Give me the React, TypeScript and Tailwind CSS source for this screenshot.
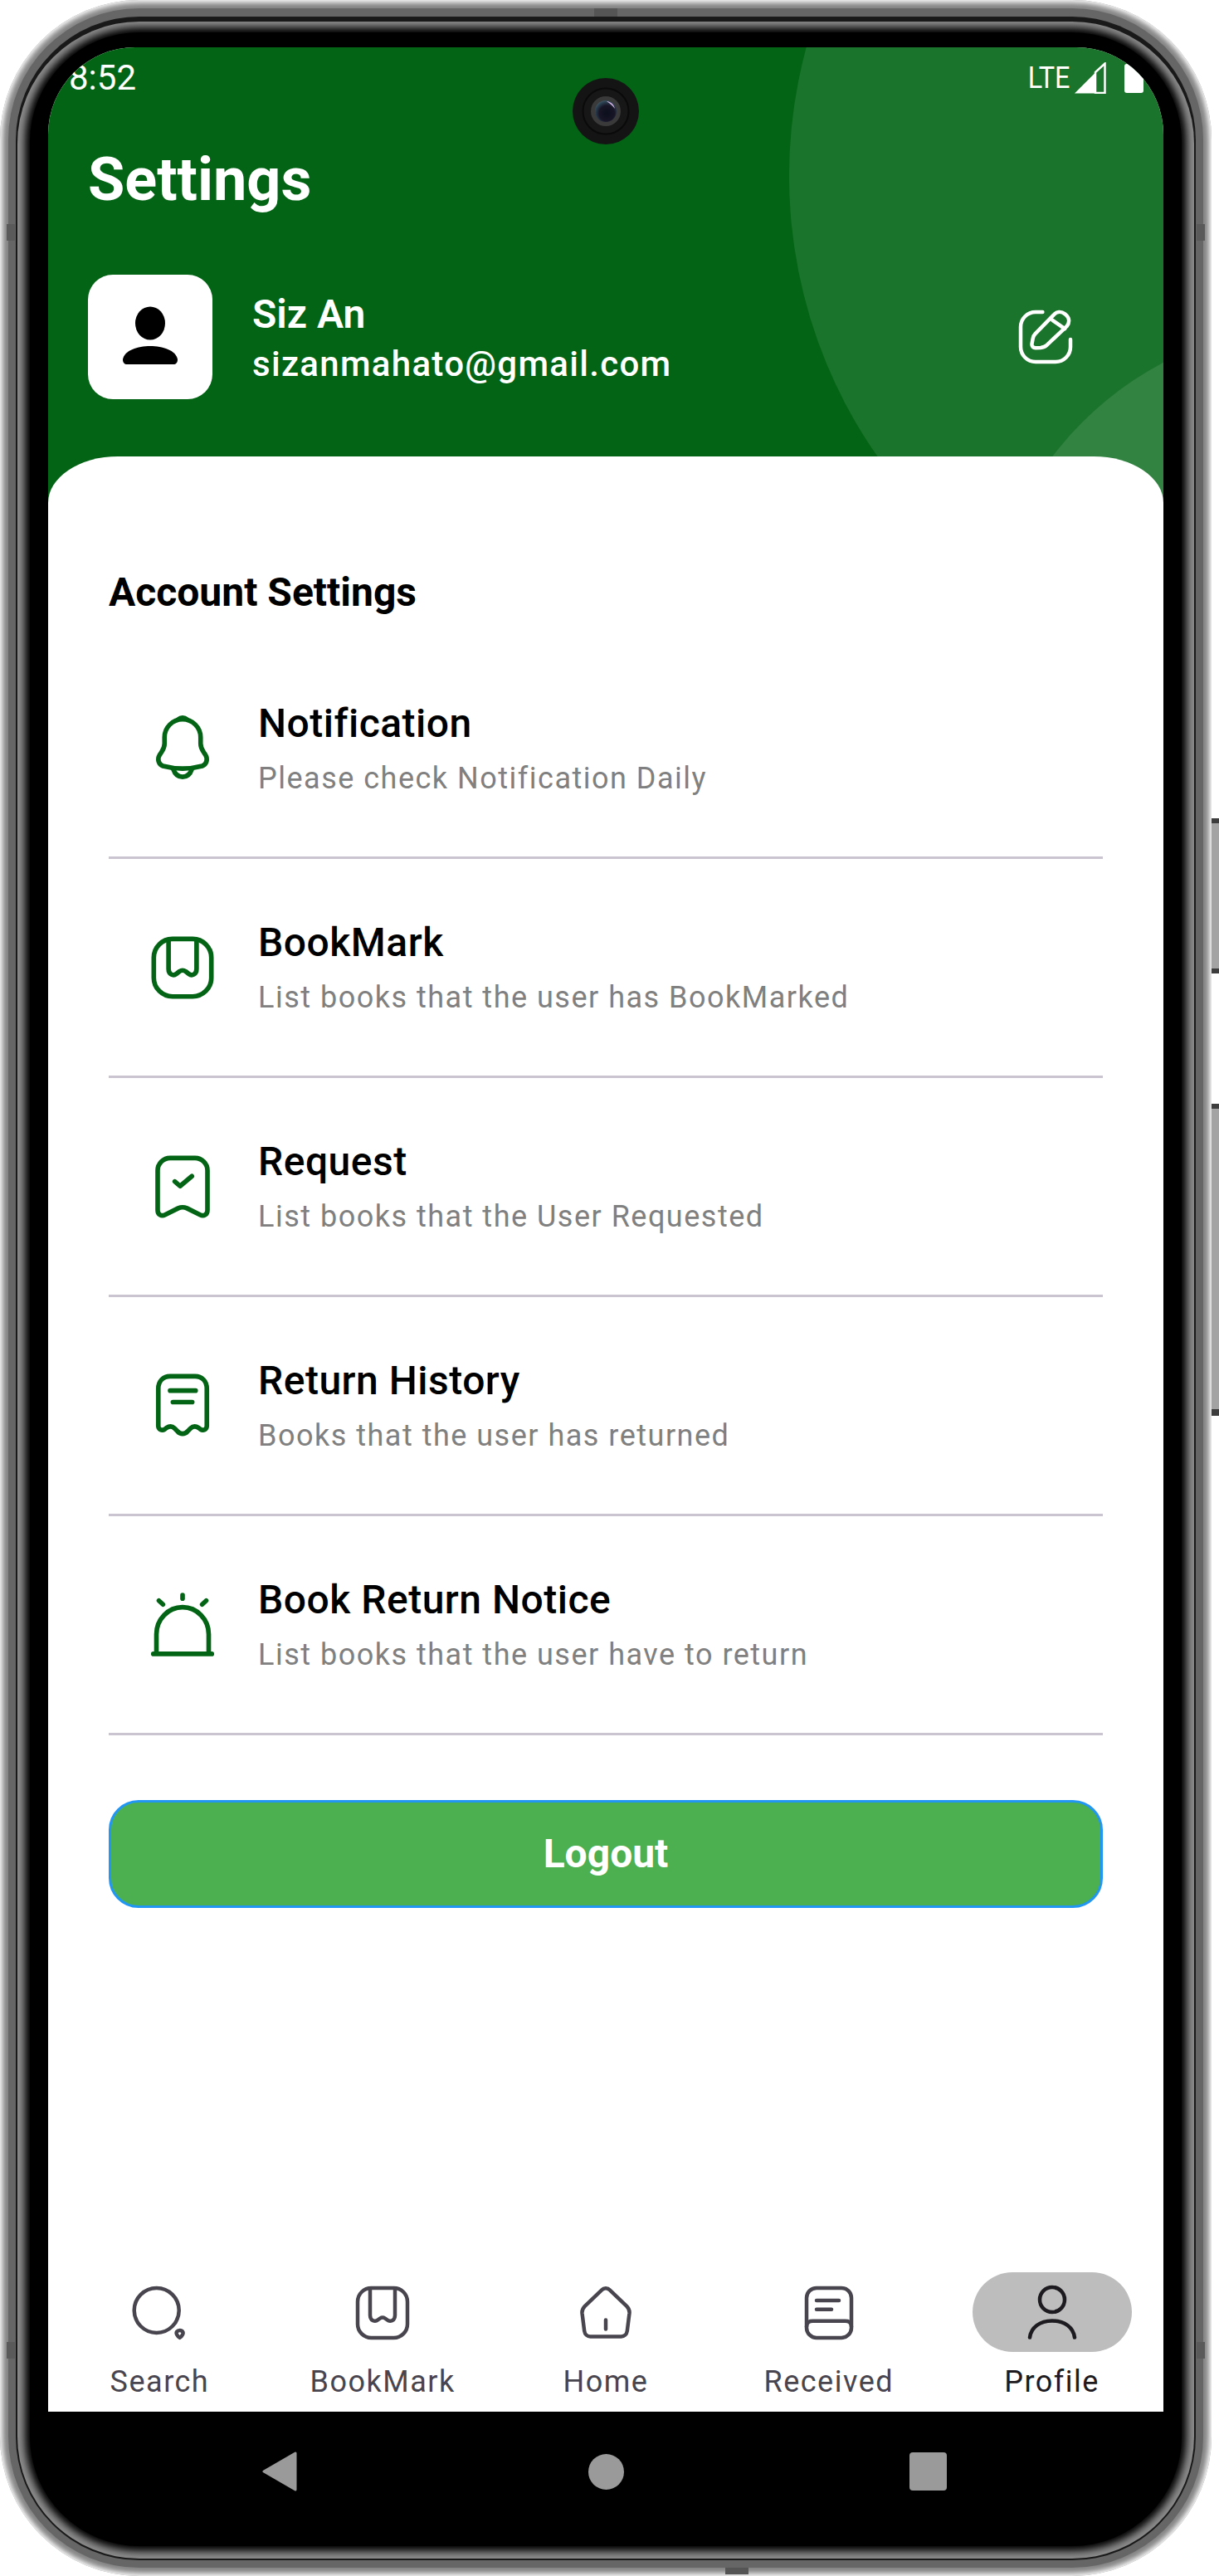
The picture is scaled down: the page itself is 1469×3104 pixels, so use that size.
import React from 'react';

const green = '#026414';

const BellIcon = () => (
  <>
    <path d="M12 2.6C8.8 2.6 6.2 5.2 6.2 8.4V10.4C6.2 11.4 5.8 12.3 5.2 13.2L4.6 14.1C3.8 15.4 4.3 17.1 5.7 17.6C9.8 18.7 14.2 18.7 18.3 17.6C19.7 17.1 20.2 15.4 19.4 14.1L18.8 13.2C18.2 12.3 17.8 11.4 17.8 10.4V8.4C17.8 5.2 15.2 2.6 12 2.6Z" />
    <path d="M10.6 2.6C11.4 1.9 12.6 1.9 13.4 2.6" />
    <path d="M9 18.6C9.6 20.4 10.7 21.1 12 21.1C13.3 21.1 14.4 20.4 15 18.6" />
  </>
);

const BookmarkIcon = () => (
  <>
    <rect x="2.75" y="2.75" width="18.5" height="18.5" rx="6" />
    <path d="M7.5 3V12.4C7.5 14.2 9 14.8 10 14L11 13.2C11.6 12.8 12.4 12.8 13 13.2L14 14C15 14.8 16.5 14.2 16.5 12.4V3" />
  </>
);

const RequestIcon = () => (
  <>
    <path d="M8 2.75H16A4 4 0 0 1 20 6.75V19.5C20 21 18.8 21.6 17.6 21L13.4 18.9C12.5 18.5 11.5 18.5 10.6 18.9L6.4 21C5.2 21.6 4 21 4 19.5V6.75A4 4 0 0 1 8 2.75Z" />
    <path d="M9.5 10.3L11.2 11.8L15 8.6" />
  </>
);

const ReturnIcon = () => (
  <>
    <path d="M4.2 6.5C4.2 4 5.8 2.5 8 2.5H16C18.2 2.5 19.8 4 19.8 6.5V18.4C19.8 19.7 18.6 20.1 17.7 19.5L17.2 19.1C16.2 18.4 15.4 18.4 14.6 19.2L13.6 20.2C12.7 21.2 11.3 21.2 10.4 20.2L9.4 19.2C8.6 18.4 7.8 18.4 6.8 19.1L6.3 19.5C5.4 20.1 4.2 19.7 4.2 18.4Z" />
    <path d="M8 7.1H16.2" />
    <path d="M8.9 10.8H15.1" />
  </>
);

const NoticeIcon = () => (
  <>
    <path d="M2.6 21.3H21.4" />
    <path d="M3.6 21V15A8.4 8.7 0 0 1 20.4 15V21" />
    <path d="M12 2.4V3.5" />
    <path d="M4.4 4.2L5.7 5.4" />
    <path d="M19.6 4.2L18.3 5.4" />
  </>
);

const rows = [
  { title: 'Notification', sub: 'Please check Notification Daily', icon: <BellIcon /> },
  { title: 'BookMark', sub: 'List books that the user has BookMarked', icon: <BookmarkIcon /> },
  { title: 'Request', sub: 'List books that the User Requested', icon: <RequestIcon /> },
  { title: 'Return History', sub: 'Books that the user has returned', icon: <ReturnIcon /> },
  { title: 'Book Return Notice', sub: 'List books that the user have to return', icon: <NoticeIcon /> },
];

const navItems = [
  {
    label: 'Search',
    icon: (
      <>
        <circle cx="10.9" cy="11.3" r="9" />
        <path d="M20.2 22.3C19.2 21.7 18.6 20.5 19 19.9C19.6 19.1 20.9 19.1 21.4 19.9C21.8 20.5 21.2 21.7 20.2 22.3Z" />
      </>
    ),
  },
  {
    label: 'BookMark',
    icon: (
      <>
        <rect x="2" y="2.3" width="20" height="20" rx="5.5" />
        <path d="M7 2.8V13.3C7 15.5 9 16.1 10.2 15.1L11 14.5C11.6 14.1 12.4 14.1 13 14.5L13.8 15.1C15 16.1 17 15.5 17 13.3V2.8" />
      </>
    ),
  },
  {
    label: 'Home',
    icon: (
      <>
        <path d="M10.3 3.2C11.3 2.1 12.7 2.1 13.7 3.2L20.4 9.6C21.2 10.4 21.6 11.4 21.5 12.4L20.6 19.6C20.4 21 19.4 21.8 18.2 21.8H5.8C4.6 21.8 3.6 21 3.4 19.6L2.5 12.4C2.4 11.4 2.8 10.4 3.6 9.6Z" />
        <path d="M12 15.2V18.8" />
      </>
    ),
  },
  {
    label: 'Received',
    icon: (
      <>
        <rect x="3" y="2.3" width="18" height="20" rx="4" />
        <path d="M3 17.8C3 16.3 4 15.6 5.5 15.6H18.5C20 15.6 21 16.3 21 17.8" />
        <path d="M7 7.3H16" />
        <path d="M7 10.9H13" />
      </>
    ),
  },
  {
    label: 'Profile',
    active: true,
    icon: (
      <>
        <ellipse cx="12" cy="7" rx="5" ry="5" />
        <path d="M3 22.2C3.5 18.2 7 15.5 12 15.5C17 15.5 20.5 18.2 21 22.2" />
      </>
    ),
  },
];

const Camera = () => (
  <svg width="80" height="80" viewBox="0 0 80 80" className="absolute left-[632px] top-[37px]">
    <defs>
      <radialGradient id="lens" cx="55%" cy="60%" r="65%">
        <stop offset="0%" stopColor="#0b0f1c" />
        <stop offset="55%" stopColor="#171526" />
        <stop offset="85%" stopColor="#2e4656" />
        <stop offset="100%" stopColor="#4b5f6c" />
      </radialGradient>
    </defs>
    <circle cx="40" cy="40" r="40" fill="#141414" />
    <circle cx="40" cy="40" r="27.5" fill="#171717" stroke="#0a0a0a" strokeWidth="2" />
    <circle cx="40" cy="40" r="18" fill="#3a3a3a" />
    <circle cx="40" cy="40" r="13" fill="url(#lens)" />
    <path d="M41 28C46 28.5 50 32 51 37C48 33 45 30.5 41 28Z" fill="#d9b4e6" />
  </svg>
);

export default function App() {
  return (
    <div className="relative w-[1469px] h-[3104px] bg-white overflow-hidden font-['Roboto',sans-serif]">
      {/* side buttons */}
      <div className="absolute left-[1459px] top-[986px] w-[10px] h-[187px] bg-[#a3a3a3] border-t-[6px] border-b-[6px] border-[#3d3d3d]" />
      <div className="absolute left-[1459px] top-[1330px] w-[10px] h-[376px] bg-[#a3a3a3] border-t-[6px] border-b-[8px] border-[#3d3d3d]" />

      {/* phone frame rings */}
      <div className="relative w-[1460px] h-[3104px] rounded-[168px] bg-[#858585] p-[10px] shadow-[inset_0_0_6px_3px_#ffffff]">
        <div className="w-full h-full rounded-[158px] bg-[#666666] px-[9px] pt-[10px] pb-[9px]">
          <div className="w-full h-full rounded-[149px] bg-[#1a1a1a] px-[2px] pt-[6px] pb-[2px]">
            <div className="w-full h-full rounded-[147px] bg-[#8c8c8c] px-[15px] pt-[13px] pb-[15px]">
              <div className="flex flex-col w-full h-full rounded-[132px] bg-black px-[22px] pt-[18px] pb-[18px] shadow-[0_0_10px_6px_#000000]">
                {/* screen */}
                <div className="relative flex flex-col w-[1344px] h-[2849px] rounded-t-[105px] overflow-hidden bg-white">
                  {/* header */}
                  <div className="relative h-[580px] shrink-0 overflow-hidden bg-[#026414] text-white">
                    <div className="absolute left-[893px] top-[-435px] w-[1180px] h-[1180px] rounded-full bg-white/10" />
                    <div className="absolute left-[1126px] top-[332px] w-[820px] h-[820px] rounded-full bg-white/10" />
                    <Camera />

                    <div className="relative flex items-center justify-between h-[56px] mt-[9px] pl-[25px] pr-[24px]">
                      <span className="text-[42px] leading-[56px]">8:52</span>
                      <div className="flex items-center">
                        <span className="text-[36px] leading-[36px] origin-right scale-x-[0.9]">LTE</span>
                        <svg width="38" height="38" viewBox="0 0 38 38" className="ml-[6px]">
                          <path d="M0 37.5L26 11.5V37.5Z" fill="#fff" />
                          <path d="M25 37V12L36.5 1.5V37Z" fill="none" stroke="#fff" strokeWidth="2.5" />
                        </svg>
                        <div className="w-[23px] h-[35px] ml-[22px] rounded-[3px] bg-white" />
                      </div>
                    </div>

                    <div className="relative px-[48px] pt-[53px] text-[72px] leading-[84px] font-bold">Settings</div>

                    <div className="relative flex items-center mt-[72px] pl-[48px] pr-[106px]">
                      <div className="flex items-center justify-center w-[150px] h-[150px] rounded-[30px] bg-white">
                        <svg width="80" height="80" viewBox="0 0 80 80">
                          <ellipse cx="40" cy="23.5" rx="18" ry="20" fill="#000" />
                          <path d="M7 67C9 56 25 51 40 51C55 51 71 56 73 67C73 71 71 73 68 73H12C9 73 7 71 7 67Z" fill="#000" />
                        </svg>
                      </div>
                      <div className="flex flex-col ml-[48px] pt-[4px]">
                        <span className="text-[48px] leading-[60px] font-semibold">Siz An</span>
                        <span className="mt-[2px] text-[42px] leading-[56px] font-medium tracking-[1.3px]">sizanmahato@gmail.com</span>
                      </div>
                      <svg width="72" height="72" viewBox="0 0 24 24" fill="none" stroke="#fff" strokeWidth="1.5" strokeLinecap="round" strokeLinejoin="round" className="ml-auto">
                        <path d="M10.8 2H8A6 6 0 0 0 2 8V16A6 6 0 0 0 8 22H16A6 6 0 0 0 22 16V13" />
                        <path d="M15.2 3.2C16.4 1.8 18.2 1.6 19.8 2.8C21.6 4.2 21.8 6 20.6 7.6L12.4 15.4C11.8 16 11 16.2 10 16.3L8 16.4C7 16.4 6.4 15.8 6.5 14.8L6.9 12.6C7 12 7.3 11.3 7.8 10.8Z" />
                        <path d="M14.8 5.3L19.7 8.7" />
                      </svg>
                    </div>
                  </div>

                  {/* sheet */}
                  <div className="relative flex flex-col flex-1 -mt-[87px] rounded-t-[84px_56px] bg-white">
                    <div className="px-[73px] pt-[134px] text-[48px] leading-[60px] font-bold text-black whitespace-nowrap">Account Settings</div>
                    <div className="flex flex-col mx-[73px] mt-[27px]">
                      {rows.map((row) => (
                        <div key={row.title} className="flex items-center h-[264px] pl-[44px] border-b-[3px] border-[#cac4d0]">
                          <svg width="90" height="90" viewBox="0 0 24 24" fill="none" stroke={green} strokeWidth="1.5" strokeLinecap="round" strokeLinejoin="round" className="shrink-0">
                            {row.icon}
                          </svg>
                          <div className="flex flex-col ml-[46px]">
                            <span className="text-[48px] leading-[64px] font-medium tracking-[0.5px] text-black">{row.title}</span>
                            <span className="mt-[8px] text-[36px] leading-[52px] tracking-[1.5px] text-[#808080]">{row.sub}</span>
                          </div>
                        </div>
                      ))}
                    </div>
                    <div className="flex items-center justify-center h-[130px] mx-[73px] mt-[78px] rounded-[36px] border-[3px] border-[#2196f3] bg-[#4caf50] text-[48px] font-bold text-white">
                      Logout
                    </div>

                    {/* bottom nav */}
                    <div className="flex mt-auto h-[168px]">
                      {navItems.map((item) => (
                        <div key={item.label} className="flex flex-col items-center flex-1">
                          <div className={`flex items-center justify-center w-[192px] h-[96px] rounded-full ${item.active ? 'bg-[#bdbdbd]' : ''}`}>
                            <svg width="72" height="72" viewBox="0 0 24 24" fill="none" stroke={item.active ? '#1d1b20' : '#49454f'} strokeWidth="1.5" strokeLinecap="round" strokeLinejoin="round">
                              {item.icon}
                            </svg>
                          </div>
                          <span className={`mt-[12px] text-[36px] leading-[48px] tracking-[1.5px] ${item.active ? 'text-[#1d1b20]' : 'text-[#49454f]'}`}>{item.label}</span>
                        </div>
                      ))}
                    </div>
                  </div>
                </div>

                {/* android nav bar */}
                <div className="flex items-center h-[144px] pl-[258px]">
                  <svg width="42" height="48" viewBox="0 0 42 48">
                    <path d="M40 2V46L2 24Z" fill="#9a9a9a" stroke="#9a9a9a" strokeWidth="3" strokeLinejoin="round" />
                  </svg>
                  <div className="w-[43px] h-[43px] ml-[351px] rounded-full bg-[#9a9a9a]" />
                  <div className="w-[45px] h-[46px] ml-[344px] rounded-[4px] bg-[#9a9a9a]" />
                </div>
              </div>
            </div>
          </div>
        </div>
      </div>

      {/* seams in the frame */}
      <div className="absolute left-[716px] top-[10px] w-[28px] h-[10px] bg-[#555555]" />
      <div className="absolute left-[874px] top-[3094px] w-[28px] h-[8px] bg-[#555555]" />
      <div className="absolute left-[8px] top-[270px] w-[10px] h-[20px] bg-[#5a5a5a]" />
      <div className="absolute left-[8px] top-[2822px] w-[10px] h-[20px] bg-[#5a5a5a]" />
      <div className="absolute left-[1442px] top-[270px] w-[10px] h-[20px] bg-[#5a5a5a]" />
      <div className="absolute left-[1442px] top-[2822px] w-[10px] h-[20px] bg-[#5a5a5a]" />
    </div>
  );
}
